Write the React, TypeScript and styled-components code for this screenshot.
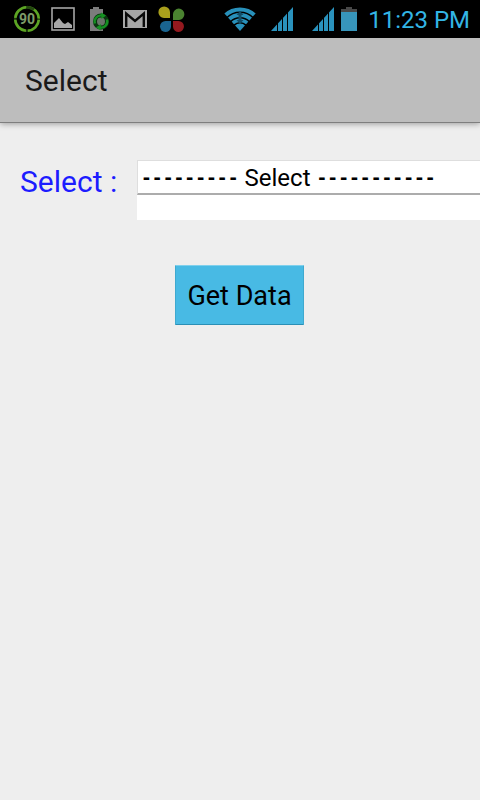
import React, { useState } from "react";
import styled, { createGlobalStyle } from "styled-components";

const GlobalStyle = createGlobalStyle`
  *, *::before, *::after { box-sizing: border-box; }
  body {
    margin: 0;
    background: #eeeeee;
    font-family: Roboto, "Liberation Sans", sans-serif;
    overflow-x: hidden;
  }
`;

const Screen = styled.div`
  min-height: 100vh;
  background: #eeeeee;
`;

const StatusBar = styled.div`
  display: flex;
  align-items: center;
  justify-content: space-between;
  height: 38px;
  padding: 0 10px 0 13px;
  background: #000;
`;

const Group = styled.div<{ $gap: number }>`
  display: flex;
  align-items: center;
  gap: ${(p) => p.$gap}px;
`;

const Icon = styled.svg`
  display: block;
  flex: none;
  overflow: visible;
`;

const Clock = styled.time`
  margin-left: 11px;
  padding-top: 2px;
  font-size: 24px;
  line-height: 36px;
  color: #33b5e5;
  white-space: nowrap;
`;

const SignalPair = styled(Group)`
  margin-left: 16px;
`;

const BatterySlot = styled.div`
  margin-left: 7px;
`;

const AppBar = styled.header`
  display: flex;
  align-items: center;
  height: 85px;
  padding: 2px 25px 0;
  background: #bdbdbd;
  border-bottom: 1px solid #7e7e7e;
  box-shadow: 0 1px 6px rgba(0, 0, 0, 0.35);
`;

const Title = styled.h1`
  margin: 0;
  font-size: 30px;
  font-weight: 400;
  line-height: 36px;
  color: #1a1a1a;
`;

const Form = styled.form`
  display: flex;
  flex-direction: column;
  gap: 45px;
  padding: 37px 0 0 20px;
`;

const Field = styled.div`
  display: flex;
  align-items: flex-start;
`;

const Label = styled.label`
  flex: none;
  width: 117px;
  padding-top: 4px;
  font-size: 30px;
  line-height: 36px;
  color: #1c1cff;
`;

const SelectPanel = styled.div`
  flex: 1;
  height: 60px;
  background: #fff;
`;

const SelectBox = styled.div`
  position: relative;
  height: 35px;
  border-top: 1px solid #dedede;
  border-left: 1px solid #dedede;
  border-bottom: 2px solid #acacac;
`;

const SelectedText = styled.div`
  display: flex;
  align-items: center;
  gap: 6px;
  height: 32px;
  padding: 2px 0 0 3px;
  font-size: 24px;
  line-height: 30px;
  color: #000;
  white-space: nowrap;
`;

const Dashes = styled.span`
  font-family: "DejaVu Sans Mono", monospace;
  font-size: 18px;
  font-weight: 700;
`;

const NativeSelect = styled.select`
  position: absolute;
  inset: 0;
  width: 100%;
  height: 100%;
  opacity: 0;
  font: inherit;
`;

const SubmitButton = styled.button`
  align-self: center;
  height: 60px;
  margin-right: 21px;
  padding: 2px 11px 0;
  border: 1px solid #3fa9cf;
  border-top-color: #7fd0ec;
  border-bottom-color: #2b8fb5;
  border-radius: 1px;
  background: #48bae4;
  font-family: inherit;
  font-size: 27px;
  line-height: 32px;
  color: #000;
`;

const NinetyIcon = () => (
  <Icon width="26" height="26" viewBox="0 1 26 26">
    <circle cx="14" cy="14" r="11.8" fill="none" stroke="#1d3b0d" strokeWidth="2.6" />
    <circle
      cx="14"
      cy="14"
      r="11.8"
      fill="none"
      stroke="#5da524"
      strokeWidth="2.6"
      strokeDasharray="16.5 2.03"
      strokeDashoffset="-1"
    />
    <path d="M14 2.2A11.8 11.8 0 0 1 21 4.6" fill="none" stroke="#24480f" strokeWidth="3" />
    <text
      x="14"
      y="19"
      textAnchor="middle"
      fontFamily="Roboto, sans-serif"
      fontSize="14"
      fontWeight="700"
      fill="#7d9c68"
    >
      90
    </text>
  </Icon>
);

const PictureIcon = () => (
  <Icon width="24" height="24" viewBox="0 0 24 24">
    <rect x="1" y="1" width="22" height="22" fill="#000" stroke="#a6a6a6" strokeWidth="1.6" />
    <path d="M3 21v-5l4-4 1-1 4 5 2 1 3-2 4 3v3z" fill="#a8a8a8" />
  </Icon>
);

const BatterySyncIcon = () => (
  <Icon width="24" height="24" viewBox="-2 0 24 24">
    <path d="M4 0h6v2h4v22H1V2h3z" fill="#7c7c7c" />
    <circle cx="12" cy="14.5" r="6" fill="#6a746a" stroke="#0b3510" strokeWidth="4" />
    <path
      d="M6 16.5A6.2 6.2 0 0 1 13 8.5M18 12.5A6.2 6.2 0 0 1 11 20.5"
      fill="none"
      stroke="#159022"
      strokeWidth="2.4"
    />
    <path d="M12 5.500l5 3-4.500 3.500zM12 17l-5 3.500 4.500 3z" fill="#159022" />
  </Icon>
);

const MailIcon = () => (
  <Icon width="24" height="18" viewBox="0 0 24 18">
    <rect width="24" height="18" fill="#a6a6a6" />
    <path d="M3.2 17V3.5L12 11l8.8-7.5V17" fill="none" stroke="#0a0a0a" strokeWidth="2.4" />
  </Icon>
);

const PetalsIcon = () => (
  <Icon width="27" height="27" viewBox="1 0 27 27">
    <path d="M12 12V6a5.8 5.8 0 1 0-6 6z" fill="#a99f1c" />
    <path d="M15 14V8a5.7 5.7 0 1 1 6 6z" fill="#4a8230" />
    <path d="M13 15v6a5.5 5.5 0 1 1-5.5-6z" fill="#1a6490" />
    <path d="M15 15v6a5.5 5.5 0 1 0 5.5-6z" fill="#94191f" />
  </Icon>
);

const WifiIcon = () => (
  <Icon width="30" height="24" viewBox="0 0 30 24">
    <defs>
      <clipPath id="wifi-wedge">
        <path d="M15 24L-1 6V0h32v6z" />
      </clipPath>
    </defs>
    <g clipPath="url(#wifi-wedge)" fill="none" stroke="#2890ba">
      <circle cx="15" cy="24" r="21.5" strokeWidth="4" />
      <circle cx="15" cy="24" r="16" strokeWidth="4" />
      <circle cx="15" cy="24" r="10.8" strokeWidth="3.5" />
      <circle cx="15" cy="24" r="3.8" strokeWidth="7.6" />
    </g>
    <path d="M15 4l3.5 4h-2v5h2L15 17l-3.5-4h2V8h-2z" fill="#134e68" />
  </Icon>
);

const SignalIcon = () => (
  <Icon width="22" height="24" viewBox="0 0 22 24">
    <path d="M0 24L22 0v24z" fill="#2a92bd" />
    <path d="M6.5 24V15M11.5 24V10M16.5 24V4" stroke="#000" strokeWidth="1" />
  </Icon>
);

const BatteryIcon = () => (
  <Icon width="16" height="24" viewBox="0 0 16 24">
    <path d="M5 0h6v2h5v4H0V2h5z" fill="#484848" />
    <path d="M0 5h16v19H0z" fill="#3795bb" />
  </Icon>
);

export default function App() {
  const [value, setValue] = useState("none");

  return (
    <Screen>
      <GlobalStyle />
      <StatusBar>
        <Group $gap={12}>
          <NinetyIcon />
          <PictureIcon />
          <BatterySyncIcon />
          <MailIcon />
          <PetalsIcon />
        </Group>
        <Group $gap={0}>
          <WifiIcon />
          <SignalPair $gap={19}>
            <SignalIcon />
            <SignalIcon />
          </SignalPair>
          <BatterySlot>
            <BatteryIcon />
          </BatterySlot>
          <Clock dateTime="23:23">11:23 PM</Clock>
        </Group>
      </StatusBar>
      <AppBar>
        <Title>Select</Title>
      </AppBar>
      <Form onSubmit={(e: React.FormEvent) => e.preventDefault()}>
        <Field>
          <Label htmlFor="choice">Select :</Label>
          <SelectPanel>
            <SelectBox>
              <SelectedText aria-hidden="true">
                <Dashes>---------</Dashes>
                <span>Select</span>
                <Dashes>-----------</Dashes>
              </SelectedText>
              <NativeSelect
                id="choice"
                value={value}
                onChange={(e) => setValue(e.target.value)}
              >
                <option value="none">--------- Select -----------</option>
              </NativeSelect>
            </SelectBox>
          </SelectPanel>
        </Field>
        <SubmitButton type="submit">Get Data</SubmitButton>
      </Form>
    </Screen>
  );
}
